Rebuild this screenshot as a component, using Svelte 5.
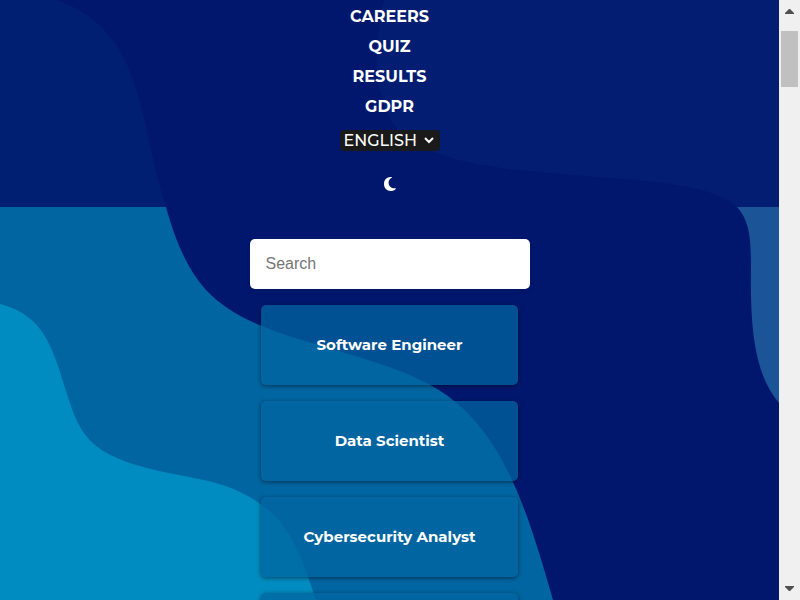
<script>
  const links = ['Careers', 'Quiz', 'Results', 'GDPR'];
  const careers = ['Software Engineer', 'Data Scientist', 'Cybersecurity Analyst', 'Network Engineer'];
  const languages = ['ENGLISH', 'DEUTSCH', 'FRANÇAIS'];
  let language = $state('ENGLISH');
  let query = $state('');
</script>

<div class="window">
  <div class="page">
    <svg class="waves" viewBox="0 0 779 600" preserveAspectRatio="none" aria-hidden="true">
      <path fill="#1b5598" d="M384 0C374 50 372 90 394 125C405 141 420 148 440 154C485 171 560 173 620 179C680 183 718 190 737 207C750 221 751 240 751 270C750 330 755 375 779 403V0Z" />
      <path fill="#0065a0" d="M0 0H58C104 19 123 46 137 92C149 132 153 168 166 207C176 243 188 270 206 290C232 317 265 329 315 344C365 359 420 373 453 400C483 424 501 456 512 480C528 514 541 558 553 600H0Z" />
      <path fill="#008cc0" d="M0 304C20 309 37 320 47 340C57 358 62 380 69 400C75 420 83 435 95 445C130 475 205 473 240 492C285 514 296 540 316 600H0Z" />
    </svg>

    <header>
      <nav>
        {#each links as link}
          <a href={'#' + link.toLowerCase()}>{link}</a>
        {/each}
      </nav>
      <div class="language">
        <select aria-label="Language" bind:value={language}>
          {#each languages as name}
            <option>{name}</option>
          {/each}
        </select>
        <svg viewBox="0 0 10 8" aria-hidden="true"><path d="M1 1L5 5L9 1" /></svg>
      </div>
      <button class="theme" aria-label="Toggle dark mode">
        <svg viewBox="0 0 14 14" aria-hidden="true">
          <path d="M7.500 0C3.600 0 1 3.100 1 7S3.800 14 7.500 14C9.700 14 11.500 13.200 12.700 11.900C13 11.600 12.800 11.300 12.400 11.300C8.400 11.600 5.600 9.200 5.600 5.700C5.600 3.500 6.900 1.700 8.800 .8C9.100 .6 9 .2 8.600 .1Z" />
        </svg>
      </button>
    </header>

    <main>
      <input type="search" placeholder="Search" aria-label="Search" bind:value={query} />
      {#each careers as career}
        <a class="card" href={'#' + career.toLowerCase().replace(' ', '-')}>{career}</a>
      {/each}
    </main>
  </div>

  <div class="scrollbar" aria-hidden="true">
    <svg viewBox="0 0 9 5"><path d="M0 5V4L4 0H5L9 4V5Z" /></svg>
    <div class="thumb"></div>
    <svg viewBox="0 0 9 5"><path d="M0 0V1L4 5H5L9 1V0Z" /></svg>
  </div>
</div>

<style>
  .window {
    display: flex;
    height: 100vh;
    overflow: hidden;
    font-family: Montserrat, Inter, sans-serif;
    color: #fff;
  }

  .page {
    position: relative;
    flex: 1;
    min-width: 0;
    overflow: hidden;
    background: #00176d;
  }

  .waves {
    position: absolute;
    inset: 0;
    width: 100%;
    height: 100%;
  }

  header {
    position: relative;
    display: flex;
    flex-direction: column;
    align-items: center;
    padding: 2px 0 16px;
    background: rgba(0, 23, 109, 0.9);
  }

  nav {
    display: flex;
    flex-direction: column;
    align-items: center;
  }

  nav a {
    font-size: 16px;
    font-weight: 700;
    line-height: 30px;
    text-transform: uppercase;
    text-decoration: none;
    color: #fff;
  }

  .language {
    display: grid;
    align-items: center;
    margin-top: 8px;
  }

  select {
    grid-area: 1 / 1;
    appearance: none;
    width: 100px;
    height: 21px;
    padding: 0 4px;
    border: 0;
    border-radius: 4px;
    background: #1a1a1a;
    font-family: inherit;
    font-size: 16px;
    font-weight: 500;
    line-height: 20px;
    color: #fff;
  }

  .language svg {
    grid-area: 1 / 1;
    justify-self: end;
    width: 10px;
    height: 8px;
    margin-right: 6px;
    fill: none;
    stroke: #fff;
    stroke-width: 2;
    pointer-events: none;
  }

  .theme {
    display: flex;
    margin-top: 26px;
    padding: 0;
    border: 0;
    background: none;
  }

  .theme svg {
    width: 14px;
    height: 14px;
    fill: #fff;
  }

  main {
    position: relative;
    display: flex;
    flex-direction: column;
    align-items: center;
    gap: 16px;
    padding-top: 32px;
  }

  input {
    box-sizing: border-box;
    width: 280px;
    height: 50px;
    padding: 0 16px;
    border: 0;
    border-radius: 5px;
    box-shadow: 0 2px 4px rgba(0, 0, 0, 0.1);
    background: #fff;
    font-family: "Liberation Sans", Arial, sans-serif;
    font-size: 16px;
    appearance: none;
  }

  input::placeholder {
    color: #757575;
  }

  .card {
    box-sizing: border-box;
    display: flex;
    align-items: center;
    justify-content: center;
    width: 33%;
    height: 80px;
    padding-bottom: 2px;
    flex-shrink: 0;
    border-radius: 5px;
    box-shadow: 0 1px 4px rgba(0, 0, 0, 0.5);
    background: rgba(0, 101, 160, 0.75);
    font-size: 15px;
    font-weight: 700;
    text-decoration: none;
    color: #fff;
  }

  .scrollbar {
    box-sizing: border-box;
    display: flex;
    flex-direction: column;
    align-items: center;
    width: 21px;
    padding: 9px 2px;
    background: #f0f0f0;
  }

  .scrollbar svg {
    width: 9px;
    height: 5px;
    fill: #505050;
  }

  .scrollbar svg:last-child {
    margin-top: auto;
  }

  .thumb {
    width: 17px;
    height: 56px;
    margin-top: 17px;
    background: #c0c0c0;
  }
</style>
